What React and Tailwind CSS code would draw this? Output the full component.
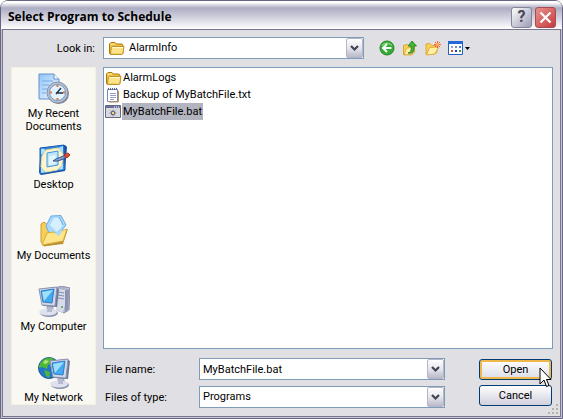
import React, { useState } from 'react';
import { clsx } from 'clsx';

const FolderIcon = () => (
  <svg width="17" height="16" viewBox="0 0 17 16" aria-hidden="true">
    <path d="M1.500 13.500V4L3 2.500h4L8.500 4h5.500L15 5.500v8L13.500 14.500H2.500z" fill="#edc03f" stroke="#a87a10" />
    <path d="M2.500 14l.8-6.500 1.200-1H16l-1.200 7-1 .8H3z" fill="#fde48a" stroke="#c49220" />
    <path d="M4.500 7.500H15" stroke="#fffbd8" />
    <path d="M3 5V4h4" fill="none" stroke="#fff0a8" />
  </svg>
);

const TextIcon = () => (
  <svg width="17" height="16" viewBox="0 0 17 16" aria-hidden="true">
    <path d="M2.500 2.500h10v12h-10z" fill="#fff" stroke="#8084b4" />
    <path d="M3 2h10" stroke="#5c668f" strokeWidth="2" strokeDasharray="1 1" />
    <path d="M5 6.500h6M5 8.500h6M5 10.500h6M5 12.500h4" stroke="#9a9fc4" />
    <path d="M13.500 4v11H4" fill="none" stroke="#b79b58" />
  </svg>
);

const BatchIcon = () => (
  <svg width="17" height="16" viewBox="0 0 17 16" aria-hidden="true">
    <path d="M.5 1.500h15v12H.5z" fill="#d9d9df" stroke="#666a80" />
    <path d="M1 3h14" stroke="#66719c" strokeWidth="2" />
    <path d="M9 3h1M11 3h1M13 3h1" stroke="#fff" />
    <path d="M8 5.500v7M4.500 9h7M5.500 6.500l5 5M10.500 6.500l-5 5" stroke="#8b8fa4" />
    <circle cx="8" cy="9" r="1.800" fill="#f1dc84" stroke="#585e79" />
  </svg>
);

const BackIcon = () => (
  <svg width="16" height="16" viewBox="0 0 16 16" aria-hidden="true">
    <circle cx="8" cy="8" r="7" fill="#34ab31" stroke="#23862a" />
    <path d="M3 5.500a6 5 0 0 1 10 0" fill="none" stroke="#7fd276" strokeWidth="1.500" />
    <path d="M12.500 8H4.500M8 4L4 8l4 4" fill="none" stroke="#fff" strokeWidth="2" />
  </svg>
);

const UpIcon = () => (
  <svg width="16" height="16" viewBox="0 0 16 16" aria-hidden="true">
    <path d="M1.500 14.500V5.500l4-1L7 6h5.500v6l-3 3z" fill="#f8d35a" stroke="#d9a62f" />
    <path d="M2 15l2.500-7 8-1-2 7z" fill="#fff0a0" stroke="#dcae38" />
    <path d="M6 13c3-.5 3.500-3 3-7H6L10 1l4.500 5H12c.5 5-1 8-6 7z" fill="#3fb834" stroke="#217a28" strokeWidth=".8" />
  </svg>
);

const NewFolderIcon = () => (
  <svg width="16" height="16" viewBox="0 0 16 16" aria-hidden="true">
    <path d="M1 14.500V4l4-.5L6.500 5.500H12v7l-3 2z" fill="#f8d254" stroke="#e0a642" />
    <path d="M1.500 15l3-7.500 9-.5-3.500 7z" fill="#fff1a6" stroke="#e2ab40" />
    <path d="M12.500 1v7M9 4.500h7M10 2l5 5M15 2l-5 5" stroke="#f0602f" />
    <circle cx="12.500" cy="4.500" r="1.400" fill="#ffc06b" />
  </svg>
);

const ViewIcon = () => (
  <svg width="16" height="16" viewBox="0 0 16 16" aria-hidden="true">
    <path d="M.5 1.500h14v13H.5z" fill="#fff" stroke="#1f5fc4" />
    <path d="M0 2.500h15" stroke="#2468d8" strokeWidth="3" />
    <path d="M3 6h2v2H3z" fill="#9a9ec4" />
    <path d="M7 6h2v2H7z" fill="#7f88b5" />
    <path d="M11 6h2v2h-2z" fill="#4b79e0" />
    <path d="M3 10h2v2H3z" fill="#e04c2d" />
    <path d="M7 10h2v2H7z" fill="#1f3cb4" />
    <path d="M11 10h2v2h-2z" fill="#3b9c48" />
  </svg>
);

const RecentIcon = () => (
  <svg width="32" height="32" viewBox="0 0 32 32" aria-hidden="true">
    <defs>
      <linearGradient id="page" x1="0" y1="0" x2="1" y2="1">
        <stop offset="0" stopColor="#8fc4fa" />
        <stop offset="1" stopColor="#f2f9ff" />
      </linearGradient>
    </defs>
    <path d="M1 1h15l5 5v20H1z" fill="url(#page)" stroke="#6690cc" />
    <path d="M16 1v5h5" fill="#fff" stroke="#6690cc" />
    <path d="M4 8h11M4 12h7M4 16h5M4 20h4" stroke="#79a9e3" />
    <circle cx="20.500" cy="20.500" r="10.500" fill="#737b91" />
    <circle cx="19.500" cy="19.500" r="10.500" fill="#b6bfd0" stroke="#8793a8" />
    <circle cx="19.500" cy="19.500" r="8" fill="#e3f2ff" stroke="#7197c3" />
    <path d="M19.500 12v2M19.500 25v2M12 19.500h2M25 19.500h2" stroke="#ef762d" strokeWidth="2" />
    <path d="M18 20h7M18 21l5-6" stroke="#1d334e" strokeWidth="1.400" />
  </svg>
);

const DesktopIcon = () => (
  <svg width="32" height="32" viewBox="0 0 32 32" aria-hidden="true">
    <path d="M3 4l24-3 2 2-2 24-24 4-2-3z" fill="#174f9f" />
    <path d="M2 4l24-3 1 25-25 4z" fill="#3489e5" stroke="#1a5ab2" />
    <path d="M3 5c3-1 5 0 4 3L3 11zM25 2l-5 2 5 6zM3 23l6 5-6 1zM25 20l-5 6 5-1z" fill="#a8e0fd" />
    <path d="M8 6l12-2 5 6-1 11-5 5-11 2-5-5 1-11z" fill="#fff5cd" stroke="#f0d890" />
    <path d="M9 9l11-2v14l-11 2z" fill="#bee5fb" stroke="#3d96dc" />
    <path d="M11 12l7-1-1 9-6 1z" fill="#e2f5ff" />
    <path d="M15 17l3-2 10-4 2 2-10 4z" fill="#83a9d4" stroke="#314e80" />
    <path d="M27 10l3-1 2 2-2 2-3 1z" fill="#e84d36" stroke="#a93631" />
  </svg>
);

const DocumentsIcon = () => (
  <svg width="32" height="32" viewBox="0 0 32 32" aria-hidden="true">
    <path d="M3 9l3-2 5 4 8 1v17l-13 2-3-4z" fill="#f7cf58" stroke="#cb9c34" />
    <path d="M8 11L13 1l10-.5 5 9.500-7 9-10-1z" fill="#a8d8fb" stroke="#6cacdf" />
    <path d="M12 10l4-7 6 0 3 7-6 7z" fill="#d6f0ff" />
    <path d="M21 2l4 8" stroke="#66a9dd" />
    <path d="M5 31l4-13 6-1 4 2 11-5-5 15z" fill="#b98f2d" />
    <path d="M4 30l5-12 6-1 3 1 11-4-4 12z" fill="#ffe488" stroke="#d7ae40" />
    <path d="M16 18l9-3-4 6z" fill="#a6dcfb" />
  </svg>
);

const Screen = ({ x, y }) => (
  <g transform={`translate(${x} ${y})`}>
    <path d="M9 18l6 1 1 5H8z" fill="#a4aabf" />
    <ellipse cx="11" cy="26" rx="9" ry="4" fill="#8990af" />
    <ellipse cx="10" cy="25" rx="9" ry="3.500" fill="#dfe1ee" />
    <path d="M10 17h4v8h-5z" fill="#b5bad0" />
    <path d="M1 2L18 0l3 2-2 18-14-1z" fill="#6a7693" />
    <path d="M1 2l18-2-2 19-13-1z" fill="#d2d9e9" stroke="#8a95b3" />
    <path d="M3 4l13-2-2 14-9-1z" fill="#43aaf0" stroke="#307bc6" />
    <path d="M4 5l11-2-9 11z" fill="#9ee0fc" />
  </g>
);

const ComputerIcon = () => (
  <svg width="32" height="32" viewBox="0 0 32 32" aria-hidden="true">
    <path d="M18 2l5-2 9 2-1 22-5 3-7-3z" fill="#aeb3cb" stroke="#8b90ad" />
    <path d="M18 2l8 2 5-2-6 25-7-3z" fill="#d7dae9" />
    <path d="M27 4l4-1-1 20-3 3z" fill="#8b91b1" />
    <path d="M20 6l6 1M20 9l6 1M20 12l6 1" stroke="#858cab" />
    <circle cx="24" cy="21" r="1" fill="#4bab4b" />
    <Screen x={0} y={1} />
  </svg>
);

const NetworkIcon = () => (
  <svg width="32" height="32" viewBox="0 0 32 32" aria-hidden="true">
    <circle cx="11" cy="11" r="10.500" fill="#2178c9" stroke="#1b5a9b" />
    <path d="M4 4c4-4 9-4 12-2l-3 5-3 1-1 4-5-2-3 1c0-3 1-5 3-7zM6 13l6 2-1 6-3-2z" fill="#50b735" />
    <path d="M7 3l4 1-3 3-3-1z" fill="#b0e777" />
    <Screen x={11} y={2} />
  </svg>
);

const Chevron = () => (
  <svg width="9" height="7" viewBox="0 0 9 7" aria-hidden="true">
    <path d="M1 1l3.500 3.500L8 1" fill="none" stroke="#3f4450" strokeWidth="2.200" />
  </svg>
);

const arrowBox =
  'w-[17px] flex items-center justify-center rounded-xs border border-[#b5b5c6] bg-linear-to-b from-white via-[#e6e6ee] to-[#b9b9ca]';

const places = [
  { label: 'My Recent Documents', Icon: RecentIcon },
  { label: 'Desktop', Icon: DesktopIcon },
  { label: 'My Documents', Icon: DocumentsIcon },
  { label: 'My Computer', Icon: ComputerIcon },
  { label: 'My Network', Icon: NetworkIcon },
];

const files = [
  { name: 'AlarmLogs', Icon: FolderIcon },
  { name: 'Backup of MyBatchFile.txt', Icon: TextIcon },
  { name: 'MyBatchFile.bat', Icon: BatchIcon },
];

const SelectBox = ({ id, value, icon }) => (
  <div className="relative h-[22px] flex border border-[#7f9db9] bg-white">
    <select id={id} className={clsx('w-full appearance-none bg-transparent leading-[18px] outline-none', icon ? 'pl-[25px]' : 'pl-[3px]')}>
      <option>{value}</option>
    </select>
    {icon && <span className="absolute left-1 top-[2px] pointer-events-none">{icon}</span>}
    <span className={clsx(arrowBox, 'absolute right-0 inset-y-0 pointer-events-none')}>
      <Chevron />
    </span>
  </div>
);

const TitleBar = () => (
  <header className="h-7 shrink-0 flex items-center gap-[3px] pl-[7px] pr-[6px] pt-1 rounded-t-md bg-linear-to-b from-white from-5% via-[#adadc4] via-25% to-white">
    <h1 className="grow font-['Open_Sans',sans-serif] text-[12px] leading-4 font-bold">Select Program to Schedule</h1>
    <button
      type="button"
      aria-label="Help"
      className="size-[21px] flex items-center justify-center rounded-[3px] border border-[#84849c] bg-linear-to-br from-white to-[#9c9cb4] text-base leading-4 font-bold text-[#47475a]"
    >
      ?
    </button>
    <button
      type="button"
      aria-label="Close"
      className="size-[21px] flex items-center justify-center rounded-[3px] border border-[#a84a50] bg-linear-to-br from-[#e8908c] to-[#c4383c]"
    >
      <svg width="13" height="13" viewBox="0 0 13 13" aria-hidden="true">
        <path d="M1.500 1.500l10 10M11.500 1.500l-10 10" stroke="#fff" strokeWidth="2.200" />
      </svg>
    </button>
  </header>
);

const App = () => {
  const [selected, setSelected] = useState('MyBatchFile.bat');
  const [fileName, setFileName] = useState('MyBatchFile.bat');

  const handleSelect = (name) => {
    setSelected(name);
    setFileName(name);
  };

  return (
    <div className="relative min-h-screen flex flex-col rounded-t-lg border border-[#66647f] bg-[#e0dfe3] font-['Roboto',sans-serif] text-[11px] leading-[13px] text-black">
      <TitleBar />
      <main className="grow flex flex-col gap-2 border-x border-b border-[#c5c5d6] inset-ring-1 inset-ring-[#77758f] pl-[9px] pr-2 pt-2 pb-[9px]">
        <div className="flex items-center">
          <label htmlFor="look-in" className="w-[92px] pr-2 text-right">Look in:</label>
          <div className="grow max-w-[261px]">
            <SelectBox id="look-in" value="AlarmInfo" icon={<FolderIcon />} />
          </div>
          <div className="ml-[15px] flex items-center gap-[7px]">
            <button type="button" aria-label="Back"><BackIcon /></button>
            <button type="button" aria-label="Up one level"><UpIcon /></button>
            <button type="button" aria-label="New folder"><NewFolderIcon /></button>
            <button type="button" aria-label="Views" className="flex items-center gap-[1px]">
              <ViewIcon />
              <svg width="5" height="3" viewBox="0 0 5 3" aria-hidden="true"><path d="M0 0h5L2.500 3z" /></svg>
            </button>
          </div>
        </div>
        <div className="grow flex gap-[7px]">
          <nav className="w-[85px] shrink-0 mb-[3px] flex flex-col border border-[#f3f1dc] bg-[#f9f8f3] pt-[5px]">
            {places.map(({ label, Icon }) => (
              <button key={label} type="button" className="h-[71px] last:h-auto flex flex-col items-center gap-[2px]">
                <Icon />
                <span className="px-1">{label}</span>
              </button>
            ))}
          </nav>
          <div className="grow flex flex-col gap-[9px]">
            <ul className="grow border border-[#7f9db9] bg-white pt-[1px] pl-[1px]">
              {files.map(({ name, Icon }) => (
                <li key={name}>
                  <button type="button" className="h-[17px] flex items-center" onClick={() => handleSelect(name)}>
                    <Icon />
                    <span className={clsx('h-[17px] px-[1px] py-[2px]', selected === name && 'bg-[#b2b4bf]')}>{name}</span>
                  </button>
                </li>
              ))}
            </ul>
            <div className="flex items-start justify-between">
              <div className="w-[342px] grid grid-cols-[96px_1fr] items-center gap-y-[6px]">
                <label htmlFor="file-name" className="pl-[2px]">File name:</label>
                <div className="h-[22px] flex border border-[#7f9db9] bg-white">
                  <input
                    id="file-name"
                    type="text"
                    className="grow min-w-0 pl-[3px] outline-none"
                    value={fileName}
                    onChange={(e) => setFileName(e.target.value)}
                  />
                  <button type="button" aria-label="File name history" className={arrowBox}>
                    <Chevron />
                  </button>
                </div>
                <label htmlFor="file-type" className="pl-[2px]">Files of type:</label>
                <SelectBox id="file-type" value="Programs" />
              </div>
              <div className="w-[73px] mr-[1px] flex flex-col gap-[5px] pt-[1px]">
                <button
                  type="button"
                  className="relative h-[21px] rounded-[3px] border border-[#003c74] bg-linear-to-b from-white to-[#dcdce8] inset-ring-2 inset-ring-[#f0b84a]"
                >
                  Open
                  <svg className="absolute left-[59px] top-[7px]" width="13" height="21" viewBox="0 0 13 21" aria-hidden="true">
                    <path d="M1 1v16l4-4 2.500 6.500 2.500-1L7.500 12.500H12z" fill="#fff" stroke="#000" />
                  </svg>
                </button>
                <button
                  type="button"
                  className="h-[21px] rounded-[3px] border border-[#003c74] bg-linear-to-b from-white to-[#d0d0df]"
                >
                  Cancel
                </button>
              </div>
            </div>
          </div>
        </div>
      </main>
      <svg className="absolute right-[3px] bottom-[3px]" width="12" height="12" viewBox="0 0 12 12" aria-hidden="true">
        <path d="M9 1h2v2H9zM9 5h2v2H9zM9 9h2v2H9zM5 5h2v2H5zM5 9h2v2H5zM1 9h2v2H1z" fill="#b8b4a4" />
      </svg>
    </div>
  );
};

export default App;
